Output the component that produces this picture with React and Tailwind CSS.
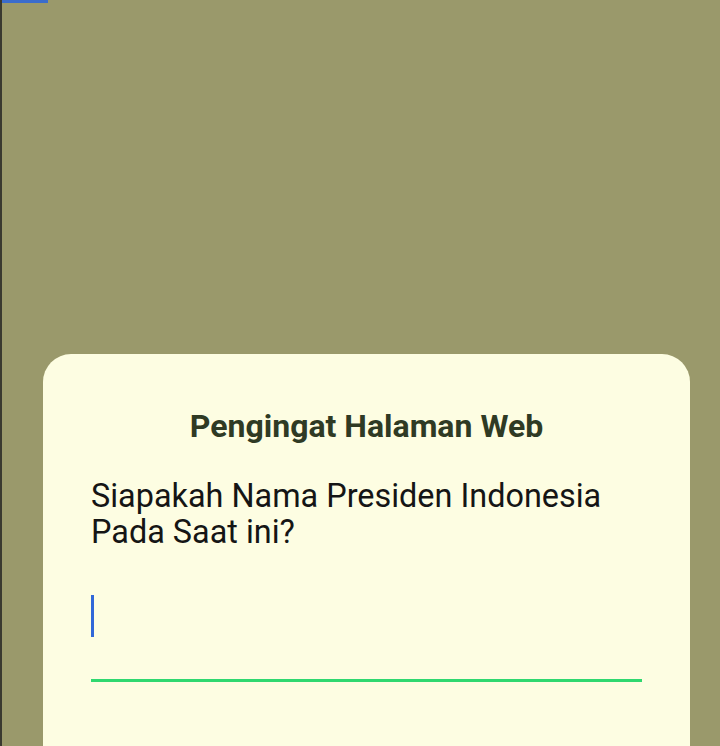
export default function App() {
  return (
    <div
      className="relative h-[746px] w-[720px] overflow-hidden bg-[#9a996b] border-l-2 border-[#3a3a30] flex flex-col"
      style={{ fontFamily: "Roboto, 'Liberation Sans', sans-serif" }}
    >
      {/* top progress strip */}
      <div className="absolute left-0 top-0 h-[3px] w-[46px] bg-[#3a6ccc]" />

      <div className="mt-[354px] ml-[41px] w-[647px] flex-1 rounded-t-[28px] bg-[#fdfde2] px-12 pt-[54px]">
        <h1 className="text-center text-[32px] font-bold leading-[36px] text-[#2f3a24]">
          Pengingat Halaman Web
        </h1>

        <p className="mt-[34px] text-[32.4px] leading-[36px] text-[#151515]">
          Siapakah Nama Presiden Indonesia
          <br />
          Pada Saat ini?
        </p>

        <div className="mt-[45px] flex h-[87px] flex-col border-b-[3px] border-[#2fd86f]">
          <div className="h-[42px] w-[3px] bg-[#3168d8]" />
        </div>
      </div>
    </div>
  );
}
